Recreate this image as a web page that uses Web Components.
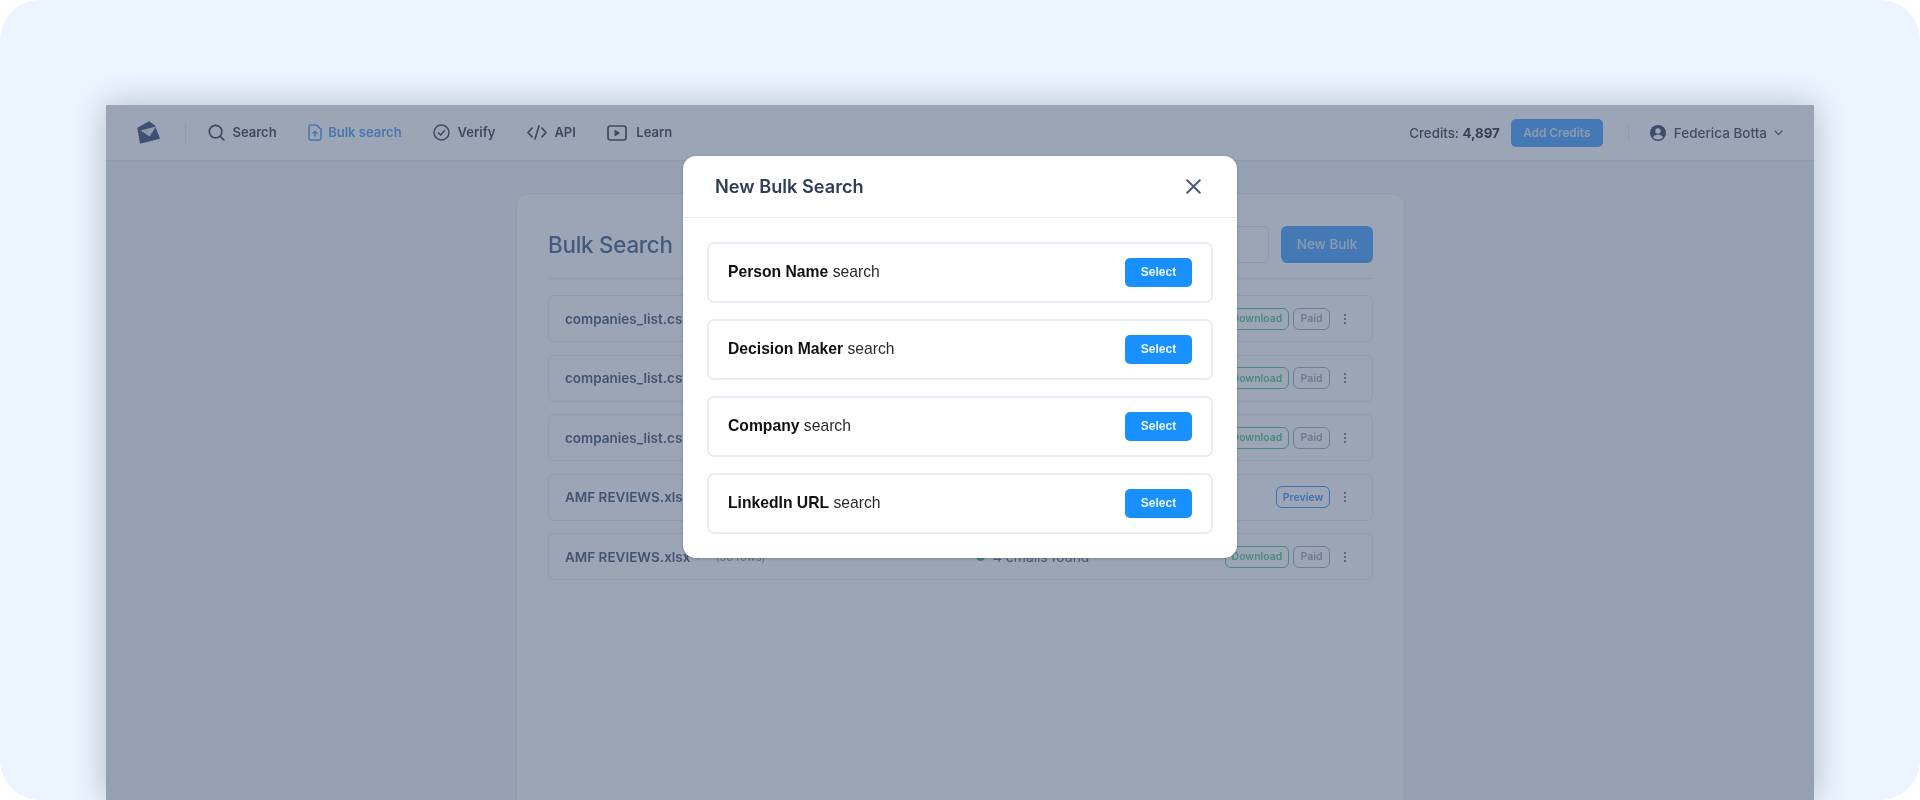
<!DOCTYPE html>
<html lang="en">
<head>
<meta charset="utf-8">
<title>New Bulk Search</title>
<style>
html,body{margin:0;padding:0;background:#fff;}
body{width:1920px;height:800px;overflow:hidden;font-family:Inter,"Liberation Sans",sans-serif;}
</style>
</head>
<body>
<x-stage>
  <app-window>
    <top-nav slot="nav">
      <nav-item icon="search">Search</nav-item>
      <nav-item icon="file" active>Bulk search</nav-item>
      <nav-item icon="check">Verify</nav-item>
      <nav-item icon="code">API</nav-item>
      <nav-item icon="play">Learn</nav-item>
    </top-nav>
    <bulk-card>
      <bulk-row name="companies_list.csv" rows="(120 rows)" found="58 emails found" download></bulk-row>
      <bulk-row name="companies_list.csv" rows="(120 rows)" found="58 emails found" download></bulk-row>
      <bulk-row name="companies_list.csv" rows="(120 rows)" found="58 emails found" download></bulk-row>
      <bulk-row name="AMF REVIEWS.xlsx" rows="(30 rows)" found="Ready"></bulk-row>
      <bulk-row name="AMF REVIEWS.xlsx" rows="(30 rows)" found="4 emails found" download></bulk-row>
    </bulk-card>
    <modal-dialog slot="modal" heading="New Bulk Search">
      <search-option><b>Person Name</b> search</search-option>
      <search-option><b>Decision Maker</b> search</search-option>
      <search-option><b>Company</b> search</search-option>
      <search-option><b>LinkedIn URL</b> search</search-option>
    </modal-dialog>
  </app-window>
</x-stage>
<script>
const def=(name,html,extra={})=>{
  const t=document.createElement('template');t.innerHTML=html;
  customElements.define(name,class extends HTMLElement{
    constructor(){super();this.attachShadow({mode:'open'}).appendChild(t.content.cloneNode(true));}
    connectedCallback(){extra.init&&extra.init.call(this);}
  });
};
const ICONS={
 search:'<svg width="17" height="17" viewBox="0 0 17 17" fill="none" stroke="currentColor" stroke-width="1.7" stroke-linecap="round"><circle cx="7.6" cy="7.6" r="6.3"/><path d="M12.3 12.3l3.5 3.5"/></svg>',
 file:'<svg width="14" height="17" viewBox="0 0 14 17" fill="none" stroke="currentColor" stroke-width="1.5" stroke-linecap="round" stroke-linejoin="round"><path d="M8.6 1H3a2 2 0 0 0-2 2v11a2 2 0 0 0 2 2h8a2 2 0 0 0 2-2V5.4z"/><path d="M7 12V7.4M5 9.2l2-2 2 2"/></svg>',
 check:'<svg width="17" height="17" viewBox="0 0 17 17" fill="none" stroke="currentColor" stroke-width="1.5" stroke-linecap="round" stroke-linejoin="round"><circle cx="8.5" cy="8.500" r="7.500"/><path d="M5.4 8.800l2.200 2.200 4-4.400"/></svg>',
 code:'<svg width="20" height="15" viewBox="0 0 20 15" fill="none" stroke="currentColor" stroke-width="1.7" stroke-linecap="round" stroke-linejoin="round"><path d="M5 3.200L1 7.500 5 11.800M15 3.200l4 4.300-4 4.300M12 1L8 14"/></svg>',
 play:'<svg width="20" height="16" viewBox="0 0 20 16" fill="none" stroke="currentColor" stroke-width="1.700" stroke-linejoin="round"><rect x="1" y="1" width="18" height="14" rx="2.400"/><path d="M8 5.200v5.600l4.400-2.800z" fill="currentColor" stroke-width="1"/></svg>'
};
def('x-stage',`<style>:host{display:block;width:1920px;height:800px;box-sizing:border-box;padding:105px 106px 0;background:#ebf4ff;border-radius:40px;overflow:hidden}</style><slot></slot>`);
def('app-window',`<style>
:host{display:block;position:relative;height:695px;background:#f1f7fb;box-shadow:0 0 30px rgba(40,50,65,.3)}
.dim{display:block;height:100%;filter:blur(.5px)}
.veil{position:absolute;inset:0;background:rgba(57,75,107,.5)}
.over{position:absolute;left:577px;top:50.500px;filter:blur(.35px)}
</style><div class="dim"><slot name="nav"></slot><slot></slot></div><div class="veil"></div><div class="over"><slot name="modal"></slot></div>`);
def('top-nav',`<style>
:host{display:flex;align-items:center;height:56px;box-sizing:border-box;padding:0 31px;background:#fff;border-bottom:1px solid #e5eaf1;color:#3a4555;font-size:14px}
.logo{margin-right:24px;display:block;flex:none}
.sep{width:1px;height:21px;background:#e3e8ef;flex:none}
nav{display:flex;align-items:center;gap:31.500px;margin-left:22px}
.right{margin-left:auto;display:flex;align-items:center}
.cr{font-size:13.300px;font-weight:500;color:#3f4955;white-space:nowrap}.cr b{font-weight:700;color:#2c3644}
.btn{margin-left:11px;width:92px;height:28px;box-sizing:border-box;display:flex;align-items:center;justify-content:center;background:#4fa7ff;border-radius:5px;color:#dbe8f6;font-size:11.800px;font-weight:600}
.right .sep{margin:0 21px 0 25px;height:16px}
.user{display:flex;align-items:center;font-size:13.500px;font-weight:500;color:#46505f;white-space:nowrap}
.user svg:first-child{margin-right:8px}
.user svg:last-child{margin-left:7px}
</style>
<svg class="logo" width="24" height="24" viewBox="0 0 24 24"><path d="M.3 6.700L12 .3l6 4 5 13.400L3 22.700z" fill="#3f567c"/><path d="M3.700 9.600L19 5.600l-6.400 9.900z" fill="#e6ebf2"/></svg>
<span class="sep"></span><nav><slot></slot></nav>
<div class="right"><span class="cr">Credits: <b>4,897</b></span><span class="btn">Add Credits</span><span class="sep"></span>
<span class="user"><svg width="16" height="16" viewBox="0 0 16 16"><circle cx="8" cy="8" r="8" fill="#3d4f6b"/><circle cx="8" cy="6" r="2.700" fill="#fff"/><path d="M3 12.600c1-2.200 3-3 5-3s4 .800 5 3c-1.300 1.200-3 1.900-5 1.900s-3.700-.700-5-1.900z" fill="#fff"/></svg>Federica Botta<svg width="9" height="6" viewBox="0 0 9 6" fill="none" stroke="#5a6678" stroke-width="1.300" stroke-linecap="round" stroke-linejoin="round"><path d="M1 1l3.500 3.500L8 1"/></svg></span></div>`);
def('nav-item',`<style>
:host{display:flex;align-items:center;gap:7.500px;font-size:13px;font-weight:600;color:#3f4955;white-space:nowrap;line-height:1}
:host([active]){color:#5aa0f5;gap:6px}
:host([icon=play]){gap:9px}
.i{display:flex}
</style><span class="i"></span><slot></slot>`,{init(){this.shadowRoot.querySelector('.i').innerHTML=ICONS[this.getAttribute('icon')];}});
def('bulk-card',`<style>
:host{display:block;box-sizing:border-box;width:889px;height:640px;margin:32px 0 0 410px;padding:32px 31px;background:#fff;border:1px solid #e4e9f0;border-bottom:0;border-radius:13px 13px 0 0}
.head{display:flex;align-items:center;height:53px;box-sizing:border-box;padding-bottom:16px;border-bottom:1px solid #e8edf3;margin-bottom:16px}
h2{margin:0;font-size:22.300px;font-weight:500;color:#4d688e;letter-spacing:-.2px}
.inp{margin-left:auto;width:230px;height:37px;box-sizing:border-box;border:1.500px solid #e2e7ee;border-radius:5px}
.new{margin-left:12px;width:92px;height:37px;display:flex;align-items:center;justify-content:center;background:#4fa7ff;border-radius:6px;color:#dbe8f6;font-size:13.500px;font-weight:500}
.list{display:flex;flex-direction:column;gap:12.500px}
</style><div class="head"><h2>Bulk Search</h2><span class="inp"></span><span class="new">New Bulk</span></div><div class="list"><slot></slot></div>`);
def('bulk-row',`<style>
:host{display:flex;align-items:center;height:47px;box-sizing:border-box;padding:0 0 0 16px;border:1.500px solid #e6ebf2;border-radius:6px;font-size:13.500px;color:#4d5d78}
.left{display:flex;align-items:center;width:411px;flex:none;white-space:nowrap}
.n{font-weight:600;min-width:124px}
.a{margin-left:6px;width:14px;color:#b6bfcb;font-size:11px}
.r{margin-left:5px;color:#8d99a9;font-size:11px}
.dot{width:9px;height:9px;border-radius:50%;background:#38c172;margin-right:8px;flex:none}
.f{color:#5f6d83;font-size:13.800px;white-space:nowrap}
.tags{margin-left:auto;display:flex;align-items:center;gap:4px}
.t{box-sizing:border-box;height:22px;display:flex;align-items:center;justify-content:center;border:1.700px solid;border-radius:6px;font-size:10.500px;font-weight:600}
.d{width:64px;color:#5cc98c;border-color:#5cc98c}.p{width:37px;color:#a0abb9;border-color:#a3aebb}.v{width:54px;color:#4a97fb;border-color:#4a97fb}
svg{margin-left:13px;margin-right:25px;flex:none}
</style><span class="left"><span class="n"></span><span class="a">›</span><span class="r"></span></span><span class="dot"></span><span class="f"></span><span class="tags"></span><svg width="4" height="12" viewBox="0 0 4 12" fill="#5a6880"><circle cx="2" cy="2" r="1.100"/><circle cx="2" cy="6" r="1.100"/><circle cx="2" cy="10" r="1.100"/></svg>`,{init(){
  const s=this.shadowRoot,g=a=>this.getAttribute(a);
  s.querySelector('.n').textContent=g('name');s.querySelector('.r').textContent=g('rows');s.querySelector('.f').textContent=g('found');
  s.querySelector('.tags').innerHTML=this.hasAttribute('download')?'<span class="t d">Download</span><span class="t p">Paid</span>':'<span class="t v">Preview</span>';
}});
def('modal-dialog',`<style>
:host{display:block;width:554px;box-sizing:border-box;background:#fff;border-radius:13px;box-shadow:0 1px 3px rgba(40,55,80,.3)}
header{display:flex;align-items:center;justify-content:space-between;height:62px;box-sizing:border-box;padding:0 36px 0 32px;border-bottom:1.500px solid #e6ecf5}
h3{margin:0;font-size:18.200px;font-weight:600;color:#2f3e58}
.body{display:flex;flex-direction:column;gap:16px;padding:24px}
</style><header><h3></h3><svg width="15" height="15" viewBox="0 0 15 15" fill="none" stroke="#4b5d7a" stroke-width="2" stroke-linecap="round"><path d="M1.200 1.200l12.600 12.600M13.800 1.200L1.200 13.800"/></svg></header><div class="body"><slot></slot></div>`,{init(){this.shadowRoot.querySelector('h3').textContent=this.getAttribute('heading');}});
def('search-option',`<style>
:host{display:flex;align-items:center;justify-content:space-between;height:61px;box-sizing:border-box;padding:0 19px;border:2px solid #e8edf5;border-radius:7px;font-family:"Liberation Sans",Arial,sans-serif;font-size:15.700px;color:#2a2a2a}
::slotted(b){color:#111;font-weight:700}
.s{width:67px;height:29px;display:flex;align-items:center;justify-content:center;background:#1890ff;border-radius:5px;color:#eaf4ff;font-size:12px;font-weight:700}
</style><span><slot></slot></span><span class="s">Select</span>`);
</script>
</body>
</html>
